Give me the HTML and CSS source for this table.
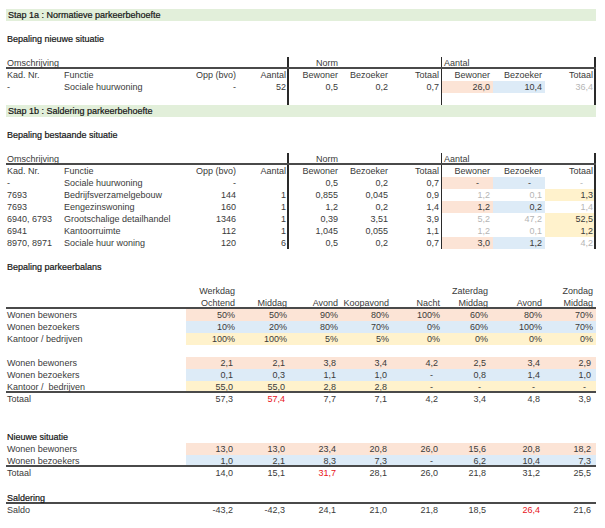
FILE: index.html
```html
<!DOCTYPE html>
<html>
<head>
<meta charset="utf-8">
<link rel="stylesheet" href="styles.css">
</head>
<body>
<div class="sheet">
  <div class="bar">Stap 1a : Normatieve parkeerbehoefte</div>
  <div class="blank"></div>
  <div class="title">Bepaling nieuwe situatie</div>
  <div class="blank"></div>
  <table class="grid">
    <colgroup><col class="ca"><col class="cb"><col class="cc"><col class="cd"><col class="ce"><col class="cf"><col class="cg"><col class="ch"><col class="ci"><col class="cj"></colgroup>
    <tr class="hd1"><td class="l">Omschrijving</td><td></td><td></td><td class="vr"></td><td class="vl">Norm</td><td></td><td class="vr"></td><td class="l">Aantal</td><td></td><td class="vr"></td></tr>
    <tr><td class="l">Kad. Nr.</td><td class="l">Functie</td><td>Opp (bvo)</td><td class="vr">Aantal</td><td class="vl">Bewoner</td><td>Bezoeker</td><td class="vr">Totaal</td><td>Bewoner</td><td>Bezoeker</td><td class="vr">Totaal</td></tr>
    <tr><td class="l">-</td><td class="l">Sociale huurwoning</td><td>-</td><td class="vr">52</td><td class="vl">0,5</td><td>0,2</td><td class="vr">0,7</td><td class="s">26,0</td><td class="b">10,4</td><td class="vr g">36,4</td></tr>
    <tr><td></td><td></td><td></td><td class="vr"></td><td class="vl"></td><td></td><td class="vr"></td><td></td><td></td><td class="vr"></td></tr>
  </table>
  <div class="bar">Stap 1b : Saldering parkeerbehoefte</div>
  <div class="blank"></div>
  <div class="title">Bepaling bestaande situatie</div>
  <div class="blank"></div>
  <table class="grid">
    <colgroup><col class="ca"><col class="cb"><col class="cc"><col class="cd"><col class="ce"><col class="cf"><col class="cg"><col class="ch"><col class="ci"><col class="cj"></colgroup>
    <tr class="hd1"><td class="l">Omschrijving</td><td></td><td></td><td class="vr"></td><td class="vl">Norm</td><td></td><td class="vr"></td><td class="l">Aantal</td><td></td><td class="vr"></td></tr>
    <tr><td class="l">Kad. Nr.</td><td class="l">Functie</td><td>Opp (bvo)</td><td class="vr">Aantal</td><td class="vl">Bewoner</td><td>Bezoeker</td><td class="vr">Totaal</td><td>Bewoner</td><td>Bezoeker</td><td class="vr">Totaal</td></tr>
    <tr><td class="l">-</td><td class="l">Sociale huurwoning</td><td>-</td><td class="vr"></td><td class="vl">0,5</td><td>0,2</td><td class="vr">0,7</td><td class="s d">-</td><td class="b d">-</td><td class="vr g d">-</td></tr>
    <tr><td class="l">7693</td><td class="l">Bedrijfsverzamelgebouw</td><td>144</td><td class="vr">1</td><td class="vl">0,855</td><td>0,045</td><td class="vr">0,9</td><td class="g">1,2</td><td class="g">0,1</td><td class="vr y">1,3</td></tr>
    <tr><td class="l">7693</td><td class="l">Eengezinswoning</td><td>160</td><td class="vr">1</td><td class="vl">1,2</td><td>0,2</td><td class="vr">1,4</td><td class="s">1,2</td><td class="b">0,2</td><td class="vr g">1,4</td></tr>
    <tr><td class="l">6940, 6793</td><td class="l">Grootschalige detailhandel</td><td>1346</td><td class="vr">1</td><td class="vl">0,39</td><td>3,51</td><td class="vr">3,9</td><td class="g">5,2</td><td class="g">47,2</td><td class="vr y">52,5</td></tr>
    <tr><td class="l">6941</td><td class="l">Kantoorruimte</td><td>112</td><td class="vr">1</td><td class="vl">1,045</td><td>0,055</td><td class="vr">1,1</td><td class="g">1,2</td><td class="g">0,1</td><td class="vr y">1,2</td></tr>
    <tr><td class="l">8970, 8971</td><td class="l">Sociale huur woning</td><td>120</td><td class="vr">6</td><td class="vl">0,5</td><td>0,2</td><td class="vr">0,7</td><td class="s">3,0</td><td class="b">1,2</td><td class="vr g">4,2</td></tr>
  </table>
  <div class="blank"></div>
  <div class="title">Bepaling parkeerbalans</div>
  <div class="blank"></div>
  <table class="balans">
    <colgroup><col class="k0"><col class="k1"><col class="k2"><col class="k3"><col class="k4"><col class="k5"><col class="k6"><col class="k7"><col class="k8"></colgroup>
    <tr><td></td><td>Werkdag</td><td></td><td></td><td></td><td></td><td>Zaterdag</td><td></td><td>Zondag</td></tr>
    <tr class="line"><td></td><td>Ochtend</td><td>Middag</td><td>Avond</td><td>Koopavond</td><td>Nacht</td><td>Middag</td><td>Avond</td><td>Middag</td></tr>
    <tr class="s"><td class="l">Wonen bewoners</td><td>50%</td><td>50%</td><td>90%</td><td>80%</td><td>100%</td><td>60%</td><td>80%</td><td>70%</td></tr>
    <tr class="b"><td class="l">Wonen bezoekers</td><td>10%</td><td>20%</td><td>80%</td><td>70%</td><td>0%</td><td>60%</td><td>100%</td><td>70%</td></tr>
    <tr class="y"><td class="l">Kantoor / bedrijven</td><td>100%</td><td>100%</td><td>5%</td><td>5%</td><td>0%</td><td>0%</td><td>0%</td><td>0%</td></tr>
    <tr><td colspan="9"></td></tr>
    <tr class="s n"><td class="l">Wonen bewoners</td><td>2,1</td><td>2,1</td><td>3,8</td><td>3,4</td><td>4,2</td><td>2,5</td><td>3,4</td><td>2,9</td></tr>
    <tr class="b n"><td class="l">Wonen bezoekers</td><td>0,1</td><td>0,3</td><td>1,1</td><td>1,0</td><td class="d">-</td><td>0,8</td><td>1,4</td><td>1,0</td></tr>
    <tr class="y n line"><td class="l">Kantoor /&nbsp; bedrijven</td><td>55,0</td><td>55,0</td><td>2,8</td><td>2,8</td><td class="d">-</td><td class="d">-</td><td class="d">-</td><td class="d">-</td></tr>
    <tr class="n"><td class="l">Totaal</td><td>57,3</td><td class="red">57,4</td><td>7,7</td><td>7,1</td><td>4,2</td><td>3,4</td><td>4,8</td><td>3,9</td></tr>
    <tr class="gap"><td colspan="9"></td></tr>
    <tr class="gap"><td colspan="9"></td></tr>
    <tr><td class="l head" colspan="9">Nieuwe situatie</td></tr>
    <tr class="s n"><td class="l">Wonen bewoners</td><td>13,0</td><td>13,0</td><td>23,4</td><td>20,8</td><td>26,0</td><td>15,6</td><td>20,8</td><td>18,2</td></tr>
    <tr class="b n line"><td class="l">Wonen bezoekers</td><td>1,0</td><td>2,1</td><td>8,3</td><td>7,3</td><td class="d">-</td><td>6,2</td><td>10,4</td><td>7,3</td></tr>
    <tr class="n"><td class="l">Totaal</td><td>14,0</td><td>15,1</td><td class="red">31,7</td><td>28,1</td><td>26,0</td><td>21,8</td><td>31,2</td><td>25,5</td></tr>
    <tr class="gap"><td colspan="9"></td></tr>
    <tr class="line"><td class="l head" colspan="9">Saldering</td></tr>
    <tr class="n"><td class="l">Saldo</td><td>-43,2</td><td>-42,3</td><td>24,1</td><td>21,0</td><td>21,8</td><td>18,5</td><td class="red">26,4</td><td>21,6</td></tr>
  </table>
</div>
</body>
</html>
```

FILE: styles.css
```css
html, body {
  margin: 0;
  padding: 0;
  background: #ffffff;
}

body {
  font-family: "Liberation Sans", Arial, sans-serif;
  font-size: 9px;
  line-height: 12px;
  color: #3a3a3a;
}

.sheet {
  width: 590px;
  padding: 9px 0 0 6px;
}

.bar {
  height: 12px;
  line-height: 12px;
  background: #e2efda;
  padding-left: 2px;
  color: #151515;
  -webkit-text-stroke: 0.2px #151515;
}

.blank {
  height: 12px;
}

.title {
  height: 12px;
  line-height: 12px;
  padding-left: 1px;
  color: #151515;
  -webkit-text-stroke: 0.2px #151515;
}

table {
  border-collapse: collapse;
  border-spacing: 0;
  table-layout: fixed;
  width: 590px;
}

td {
  height: 12px;
  padding: 0 3px 0 0;
  line-height: 12px;
  text-align: right;
  white-space: nowrap;
  overflow: visible;
  box-sizing: border-box;
}

td.l {
  text-align: left;
  padding: 0 0 0 1px;
}

/* top tables */
.ca { width: 57px; }
.cb { width: 125px; }
.cc { width: 50px; }
.cd { width: 50px; }
.ce { width: 53px; }
.cf { width: 50px; }
.cg { width: 51px; }
.ch { width: 51px; }
.ci { width: 52px; }
.cj { width: 51px; }

.grid td:nth-child(3) { padding-right: 2px; }
.grid td:nth-child(4) { padding-right: 2px; }
.grid td:nth-child(5) { padding-right: 3px; }
.grid td:nth-child(8).l { padding-left: 2px; }
.grid td:nth-child(10) { padding-right: 3px; }

.grid td.vr { box-shadow: inset -1px 0 0 #2a2a2a; }
.grid td.vl { box-shadow: inset 1px 0 0 #2a2a2a; }
.grid td:nth-child(10).vr { box-shadow: inset -2px 0 0 #2a2a2a; }

.grid tr.hd1 td { box-shadow: inset 0 -2px 0 #4a4a4a; }
.grid tr.hd1 td.vr { box-shadow: inset 0 -2px 0 #4a4a4a, inset -1px 0 0 #2a2a2a; }
.grid tr.hd1 td.vl { box-shadow: inset 0 -2px 0 #4a4a4a, inset 1px 0 0 #2a2a2a; }
.grid tr.hd1 td:nth-child(10).vr { box-shadow: inset 0 -2px 0 #4a4a4a, inset -2px 0 0 #2a2a2a; }

.grid td.s { background: #fce4d6; }
.grid td.b { background: #ddebf7; }
.grid td.y { background: #fff2cc; }
.grid td.g { color: #b5b5b5; }
.grid td.d { padding-right: 14px; }
.grid td.d.g { padding-right: 13px; }

/* balans */
.k0 { width: 180px; }
.k1 { width: 52px; }
.k2 { width: 52px; }
.k3 { width: 51px; }
.k4 { width: 51px; }
.k5 { width: 51px; }
.k6 { width: 48px; }
.k7 { width: 54px; }
.k8 { width: 51px; }

.balans tr.gap td { height: 13px; }

.balans tr.s td:not(.l) { background: #fce4d6; }
.balans tr.b td:not(.l) { background: #ddebf7; }
.balans tr.y td:not(.l) { background: #fff2cc; }

.balans tr.n td { padding-right: 5px; }
.balans tr.n td.l { padding-right: 0; }
.balans td.d { padding-right: 10px; }
.balans tr.n td.d { padding-right: 10px; }

.balans tr.line td { box-shadow: inset 0 -2px 0 #4a4a4a; }

.balans td.head {
  color: #151515;
  -webkit-text-stroke: 0.2px #151515;
}

.red { color: #e8141b; }
```
